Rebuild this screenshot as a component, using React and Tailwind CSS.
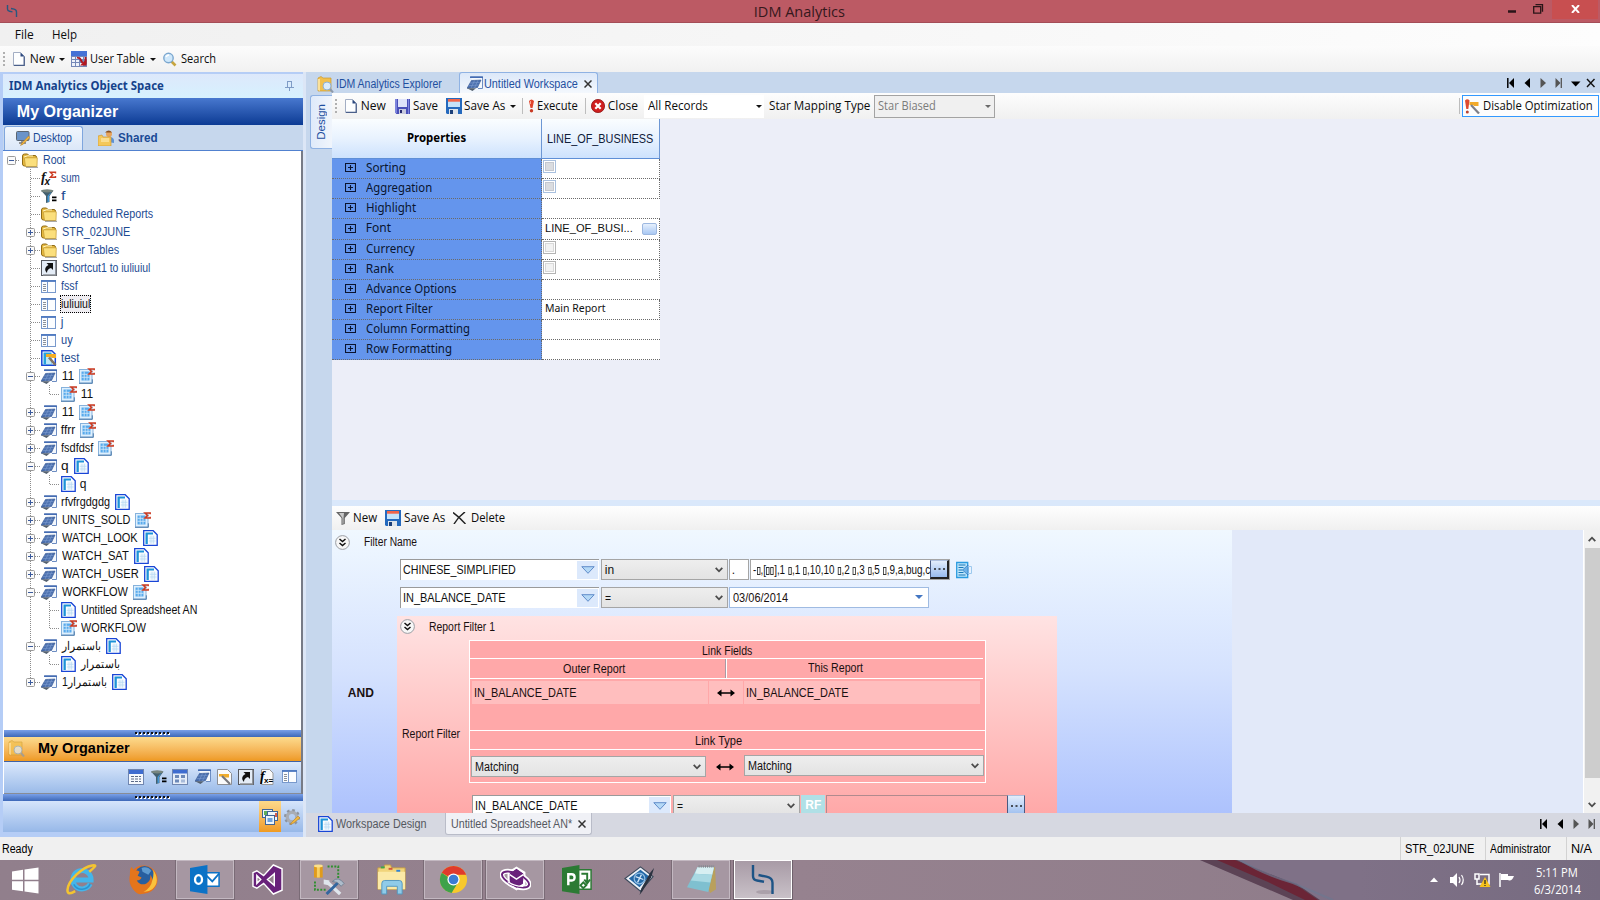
import React, { useLayoutEffect, useRef, useState } from "react";

const SANS = "font-['Liberation_Sans',sans-serif]";
const UI = "font-['Open_Sans',sans-serif]";
const TAHOMA = "font-['Noto_Sans',sans-serif]";

/* A single-line label condensed or widened to occupy w pixels. */
function T({ w, className = "", children }) {
  const ref = useRef(null);
  const [k, setK] = useState(1);
  useLayoutEffect(() => {
    const n = ref.current.offsetWidth;
    if (n) setK((w + 1) / n);
  }, [w]);
  return (
    <span className={"block shrink-0 whitespace-pre " + className} style={{ width: w }}>
      <span ref={ref} className="-ml-[0.2px] inline-block origin-left" style={{ transform: `scaleX(${k})` }}>
        {children}
      </span>
    </span>
  );
}

function Svg({ w = 16, h = 16, vb, className = "", children }) {
  return (
    <svg width={w} height={h} viewBox={vb || `0 0 ${w} ${h}`} className={"block shrink-0 " + className}>
      {children}
    </svg>
  );
}

/* ---------- 16px icons ---------- */
const Page = ({ className }) => (
  <Svg w={12} h={14} className={className}>
    <path d="M.5.5h7l4 4v9H.5z" fill="#fdfeff" stroke="#a3aec4" />
    <path d="M7.5.5l4 4h-4z" fill="#2f4a80" />
    <path d="M11.200 4.500v9H1" stroke="#4a5f8a" strokeWidth="1.300" fill="none" />
  </Svg>
);
const Caret = ({ className = "" }) => (
  <Svg w={6} h={3} className={className}><path d="M0 0h6L3 3z" fill="#111" /></Svg>
);
const CalTable = ({ className }) => (
  <Svg className={className}>
    <rect width="16" height="16" fill="#7488b8" />
    <rect width="16" height="5" fill="#4572d6" />
    <path d="M1 6h3v2H1zM5 6h3v2H5zM9 6h3v2H9zM1 9h3v2H1zM5 9h3v2H5zM1 12h3v3H1zM5 12h3v3H5zM9 12h3v3H9zM13 6h2v2h-2z" fill="#eef2fb" />
    <path d="M6 6.500l3 1 2.500 4.500M14.500 6v7" stroke="#b3161e" strokeWidth="1.800" fill="none" />
    <path d="M15.500 8v6.500H9z" fill="#b3161e" />
  </Svg>
);
const Search = ({ className }) => (
  <Svg w={14} h={15} className={className}>
    <path d="M8 9l4.500 4.500" stroke="#c7a53e" strokeWidth="2.600" />
    <circle cx="5.500" cy="6" r="4.700" fill="#cfe8fb" stroke="#7ba7cf" strokeWidth="1.400" />
    <path d="M3 5q1-2 3-2" stroke="#fff" strokeWidth="1.400" fill="none" />
  </Svg>
);
const Floppy = ({ className }) => (
  <Svg w={15} h={15} className={className}>
    <path d="M0 0h15v15H1.500L0 13.500z" fill="#4a4fb8" />
    <path d="M0 0h2v14H0z" fill="#7d84dc" />
    <path d="M3 0h9v8H3z" fill="#dfe3fa" />
    <path d="M13.500 0v15" stroke="#7f86e0" fill="none" />
    <path d="M4 10h7v5H4z" fill="#c8cade" /><path d="M5 11h2v3H5z" fill="#25286e" />
  </Svg>
);
const FloppyRed = ({ className }) => (
  <Svg w={16} h={16} className={className}>
    <path d="M0 0h16v16H1l-1-1z" fill="#2569bd" />
    <path d="M2 1h12v3H2z" fill="#f0644a" /><path d="M2 3.700h12V9H2z" fill="#c4e2fa" />
    <path d="M3 11h9v5H3z" fill="#dfe4ea" /><path d="M4 12h3v4H4z" fill="#1c3f78" />
  </Svg>
);
const Bang = ({ className }) => (
  <Svg w={7} h={14} className={className}>
    <path d="M1 2q2.500-3 5 0L4.500 9h-2z" fill="#e0452c" /><circle cx="3.500" cy="11.800" r="1.700" fill="#c93a24" />
    <path d="M2.500 2v3" stroke="#f9a38f" />
  </Svg>
);
const CloseRed = ({ className }) => (
  <Svg w={14} h={14} className={className}>
    <circle cx="7" cy="7" r="6.600" fill="#cf1f1f" stroke="#8f1414" strokeWidth=".8" />
    <path d="M4.300 4.300l5.400 5.400M9.700 4.300L4.300 9.700" stroke="#fff" strokeWidth="2.200" />
  </Svg>
);
const ExecWrench = ({ className }) => (
  <Svg w={15} h={15} className={className}>
    <path d="M0 1.500q2.300-2.500 4.600 0L3.300 10H1.300z" fill="#dd4a30" /><circle cx="2.300" cy="13" r="1.500" fill="#b94432" />
    <path d="M4.500 3h9v4H9L8 6H4.500z" fill="#f2aa2a" /><path d="M6 6l8 8.500" stroke="#7f7f86" strokeWidth="2.200" />
  </Svg>
);
const FolderSearch = ({ className }) => (
  <Svg w={17} h={17} className={className}>
    <path d="M1 2l3-1.500 2 1.500h8v13H1z" fill="#f2c04e" stroke="#c9982f" strokeWidth=".7" />
    <path d="M3 3v12l-2-1V3z" fill="#fbe19a" />
    <circle cx="10" cy="10" r="4" fill="#dcecfa" stroke="#8fb0d0" /><path d="M13 13l3 3.500" stroke="#8d99aa" strokeWidth="2" />
  </Svg>
);
const Workspace = ({ className }) => (
  <Svg w={16} h={15} className={className}>
    <path d="M3.500 1h12v11.500H11" fill="#f4f8fd" stroke="#6d8dc2" />
    <path d="M3 1.200h13" stroke="#4068b0" strokeWidth="1.500" />
    <path d="M4.500 4.500L14 4 10.500 11.500 0 12.300z" fill="#4a6fae" stroke="#34548f" strokeWidth=".6" />
    <path d="M3 7l9.500-.6M1.500 9.700l10-.7M7.500 4.500L4 12M11 4.200L7.500 12" stroke="#7f9dd0" strokeWidth=".6" />
    <path d="M0 12.300h9L5.500 15z" fill="#54606f" />
  </Svg>
);
const Folder = () => (
  <Svg w={16} h={15}>
    <path d="M.5 3q0-2 2-2h3l1.500 1.500h6q1.500 0 1.500 2V13H2.500q-2 0-2-2z" fill="#e6b93e" stroke="#8f6b17" />
    <path d="M2.300 4.800h13L15 13.500H3.500z" fill="#fbdf7c" stroke="#c39a33" strokeWidth=".7" />
    <path d="M2 4q3-2 9-1" stroke="#fff5c4" fill="none" />
    <path d="M4 14.300h12" stroke="#777" strokeWidth=".8" />
  </Svg>
);
const FxSum = () => (
  <Svg w={16} h={15}>
    <text x="0" y="11" fontSize="14" fontStyle="italic" fontWeight="bold" fontFamily="Liberation Serif, serif" fill="#111">f</text>
    <text x="3.500" y="14" fontSize="10" fontWeight="bold" fontStyle="italic" fontFamily="Liberation Sans, sans-serif" fill="#111">x</text>
    <path d="M14.500 2.500V1.200H9.300l2.500 2.500-2.500 2.600h5.200V5" stroke="#cb3b22" strokeWidth="1.400" fill="none" />
  </Svg>
);
const FunnelEq = ({ className }) => (
  <Svg w={16} h={14} className={className}>
    <path d="M0 1.500h12.500L8.500 7v6l-3.500 1V7z" fill="#44606e" /><path d="M6.500 7v6.300l1.500-.6V7l3-5z" fill="#3f94d3" />
    <ellipse cx="6.200" cy="1.900" rx="6" ry="1.700" fill="#77857f" />
    <path d="M11 8.300h4.500M11 11.300h4.500" stroke="#000" strokeWidth="1.800" />
  </Svg>
);
const Shortcut = ({ className }) => (
  <Svg className={className}>
    <rect x=".5" y=".5" width="15" height="15" fill="#e4ecf6" stroke="#56585e" />
    <path d="M14.700 1v14H2" stroke="#8c9097" fill="none" strokeWidth="1.300" />
    <path d="M12 3v7l-2-2c-3 1-4 2.500-4 5-3-3-2-6.500 1.500-8L5.500 3z" fill="#111" />
  </Svg>
);
const FormIcon = ({ className }) => (
  <Svg w={15} h={13} className={className}>
    <rect x=".5" y=".5" width="14" height="12" fill="#fbfdff" stroke="#7899cc" />
    <path d="M0 1h15" stroke="#4c78c0" strokeWidth="1.800" /><path d="M6.500 2v10" stroke="#7899cc" />
    <path d="M2 4.500h3M2 6.500h3M2 8.500h3M2 10.500h3" stroke="#8a9099" />
  </Svg>
);
const TestIcon = () => (
  <Svg w={16} h={16}>
    <path d="M.8.800h10l3.500 3.500v11H.800z" fill="#fff" stroke="#1845d6" strokeWidth="1.500" />
    <path d="M2.500 2.500h8v12h-8z" fill="#27a3dc" /><path d="M5 6h5v8H5z" fill="#bfe7f6" />
    <path d="M5 4h10v4h-4L10 7H5z" fill="#f4ad24" /><path d="M8 7.500l6.500 7.500" stroke="#7f7466" strokeWidth="2.600" />
  </Svg>
);
const ReportSum = () => (
  <Svg w={16} h={16}>
    <rect x=".5" y="1.500" width="12.500" height="13.500" fill="#dff0fd" stroke="#86b2dc" />
    <path d="M2.500 3.500h8v9h-8z" fill="#58aaec" /><path d="M5.200 3.500v9M8 6v6.500M2.500 6.300h8M2.500 9.300h8" stroke="#d6ebfb" strokeWidth=".8" />
    <path d="M0 15.300h13.300v-4" stroke="#4f7dac" fill="none" />
    <path d="M15.200 2.300V1H10l2.600 2.400L10 6h5.200V4.700" stroke="#cb3b22" strokeWidth="1.500" fill="none" />
  </Svg>
);
const Sheet = ({ className }) => (
  <Svg w={15} h={16} className={className}>
    <path d="M.7.700h9.500l4 4v10.600H.700z" fill="#fff" stroke="#1845d6" strokeWidth="1.300" />
    <path d="M2.500 2.500h7.500v2H4.800v9.500H2.500z" fill="#1d93d8" />
    <path d="M5.800 5.500h6.700v8.200H5.800z" fill="#eef7fd" /><path d="M8 5.700v8M10.300 5.700v8M5.800 8.300h6.700M5.800 11h6.700" stroke="#b4d9f2" strokeWidth=".7" />
  </Svg>
);
const TableIcon = () => (
  <Svg w={16} h={16}>
    <rect x=".5" y=".5" width="15" height="15" fill="#f5f8fd" stroke="#7086b0" />
    <path d="M1 1h14v4H1z" fill="#3e6cd0" />
    <path d="M3 7.500h10M3 10h10M3 12.500h10" stroke="#5c6b88" strokeDasharray="3 1" />
  </Svg>
);
const DashIcon = () => (
  <Svg w={16} h={16}>
    <rect x=".5" y=".5" width="15" height="15" fill="#e6edf8" stroke="#7086b0" />
    <path d="M1 1h14v3.500H1z" fill="#3e6cd0" /><path d="M3 6h4v3H3zM9 6h4v3H9zM3 10.500h4v3H3z" fill="#6d89b8" /><path d="M9 10.500h4v3H9z" fill="#a8bbda" />
  </Svg>
);
const WandPage = () => (
  <Svg w={15} h={16}>
    <path d="M.5.500h10l4 4v11H.5z" fill="#fbfbfb" stroke="#8c8f96" />
    <path d="M2 5h10v3.500H8L7 7.500H2z" fill="#f0ad2d" /><path d="M5 7l8 8" stroke="#77777c" strokeWidth="2.200" />
  </Svg>
);
const FxPage = () => (
  <Svg w={14} h={16}>
    <path d="M1.500.5h8l3.500 3.500v11.500H1.500z" fill="#fafafa" stroke="#999" />
    <text x="0" y="12" fontSize="14" fontStyle="italic" fontWeight="bold" fontFamily="Liberation Serif, serif">f</text>
    <text x="4" y="14" fontSize="8" fontWeight="bold" fontFamily="Liberation Sans, sans-serif">x=</text>
  </Svg>
);

/* ---------- object tree ---------- */
const TREE = [
  { l: 0, box: "-", icon: Folder, t: "Root", w: 21, c: "b", g: 5 },
  { l: 1, icon: FxSum, t: "sum", w: 18, c: "b", g: 4 },
  { l: 1, icon: FunnelEq, t: "f", w: 3, c: "b", g: 4 },
  { l: 1, icon: Folder, t: "Scheduled Reports", w: 90, c: "b", g: 5 },
  { l: 1, box: "+", icon: Folder, t: "STR_02JUNE", w: 67, c: "b", g: 5 },
  { l: 1, box: "+", icon: Folder, t: "User Tables", w: 56, c: "b", g: 5 },
  { l: 1, icon: Shortcut, t: "Shortcut1 to iuliuiul", w: 87, c: "b", g: 5 },
  { l: 1, icon: FormIcon, t: "fssf", w: 16, c: "b", g: 5 },
  { l: 1, icon: FormIcon, t: "iuliuiul", w: 28, sel: true, g: 4 },
  { l: 1, icon: FormIcon, t: "j", w: 2, c: "b", g: 5 },
  { l: 1, icon: FormIcon, t: "uy", w: 11, c: "b", g: 5 },
  { l: 1, icon: TestIcon, t: "test", w: 17, c: "b", g: 4 },
  { l: 1, box: "-", icon: Workspace, t: "11", w: 11, g: 5, tail: "r" },
  { l: 2, last: true, icon: ReportSum, t: "11", w: 11, g: 4 },
  { l: 1, box: "+", icon: Workspace, t: "11", w: 11, g: 5, tail: "r" },
  { l: 1, box: "+", icon: Workspace, t: "ffrr", w: 13, g: 4, tail: "r" },
  { l: 1, box: "+", icon: Workspace, t: "fsdfdsf", w: 31, g: 4, tail: "r" },
  { l: 1, box: "-", icon: Workspace, t: "q", w: 7, g: 4, tail: "s" },
  { l: 2, last: true, icon: Sheet, t: "q", w: 6, g: 4 },
  { l: 1, box: "+", icon: Workspace, t: "rfvfrgdgdg", w: 48, g: 4, tail: "s" },
  { l: 1, box: "+", icon: Workspace, t: "UNITS_SOLD", w: 67, g: 5, tail: "r" },
  { l: 1, box: "+", icon: Workspace, t: "WATCH_LOOK", w: 75, g: 5, tail: "s" },
  { l: 1, box: "+", icon: Workspace, t: "WATCH_SAT", w: 66, g: 5, tail: "s" },
  { l: 1, box: "+", icon: Workspace, t: "WATCH_USER", w: 76, g: 5, tail: "s" },
  { l: 1, box: "-", icon: Workspace, t: "WORKFLOW", w: 65, g: 5, tail: "r" },
  { l: 2, icon: Sheet, t: "Untitled Spreadsheet AN", w: 115, g: 5 },
  { l: 2, last: true, icon: ReportSum, t: "WORKFLOW", w: 64, g: 4 },
  { l: 1, box: "-", icon: Workspace, t: "باستمرار", w: 38, g: 5, tail: "s" },
  { l: 2, last: true, icon: Sheet, t: "باستمرار", w: 38, g: 5 },
  { l: 1, box: "+", end: true, icon: Workspace, t: "باستمرار1", w: 44, g: 5, tail: "s" },
];
const GUT = [18, 37, 57];

function Gutter({ r }) {
  const bx = r.l === 0 ? 3 : 22;
  return (
    <Svg w={GUT[r.l]} h={18}>
      <g stroke="#8c8c8c" strokeDasharray="1 1" fill="none">
        {r.l > 0 && <path d={`M26.500 0V${r.end ? 9 : 18}`} />}
        {r.l === 0 && <path d="M8 9.500h8" />}
        {r.l === 1 && <path d="M27 9.500h9" />}
        {r.l === 2 && <path d={`M45.500 0V${r.last ? 9 : 18}M46 9.500h9`} />}
      </g>
      {r.box && (
        <g>
          <rect x={bx + 0.5} y="5.500" width="8" height="8" rx="1" fill="#fafafa" stroke="#9a9a9a" />
          <path d={`M${bx + 2} 9.500h5` + (r.box === "+" ? `M${bx + 4.5} 7v5` : "")} stroke="#3b5a9c" />
        </g>
      )}
    </Svg>
  );
}

const MG = { 4: "ml-[4px]", 5: "ml-[5px]", 6: "ml-[6px]", 7: "ml-[7px]" };

function TreeRow({ r }) {
  const Icon = r.icon;
  return (
    <div className="flex h-[18px] shrink-0 items-center">
      <Gutter r={r} />
      <Icon />
      <div className={MG[r.g] + (r.sel ? " -my-px border border-dotted border-black bg-[#f0eef2] py-px pr-[1px]" : "")}>
        <T w={r.w} className={"text-[12px] leading-[14px] " + (r.c ? "text-[#1d4b92]" : "text-[#101010]")}>{r.t}</T>
      </div>
      {r.tail && <div className="ml-[6px]">{r.tail === "r" ? <ReportSum /> : <Sheet />}</div>}
    </div>
  );
}

function Splitter() {
  return (
    <div className="flex h-[7px] shrink-0 items-center justify-center bg-linear-to-b from-[#7aa0e8] to-[#3d68b8]">
      <Svg w={36} h={3}>
        <path d="M1 2h35" stroke="#fff" strokeWidth="2" strokeDasharray="2 2" />
        <path d="M0 1h35" stroke="#111" strokeWidth="2" strokeDasharray="2 2" />
      </Svg>
    </div>
  );
}

function LeftPanel() {
  return (
    <div className="flex h-full w-[306px] shrink-0 bg-[#dbe6f7]">
      <div className="flex h-full w-[306px] flex-col border-r-[3px] border-[#dce6f6] bg-[#b5cdf6] pt-[2px] pl-[3px]">
        <div className="flex h-[24px] w-full shrink-0 items-center bg-linear-to-b from-[#dde8fb] to-[#d6f1fe] pl-[6px]">
          <T w={154} className={"text-[12px] leading-[16px] font-bold text-[#15428b] " + TAHOMA}>IDM Analytics Object Space</T>
          <Svg w={9} h={10} className="ml-[122px]"><path d="M2.500 0v6M6.500 0v6M2 .5h5M0 6.500h9M4.500 7v3" stroke="#7f9cc6" /></Svg>
        </div>
        <div className="flex h-[27px] w-full shrink-0 items-center bg-linear-to-b from-[#4878cf] to-[#0b3b94] pl-[14px]">
          <T w={100} className="text-[16px] leading-[20px] font-bold text-white">My Organizer</T>
        </div>
        <div className="flex h-[26px] w-full shrink-0 items-end border-b border-[#5181cf] bg-[#c6d7ed]">
          <div className="ml-px flex h-[24px] w-[79px] items-center rounded-t-[3px] border border-b-0 border-[#7fa6de] bg-linear-to-b from-[#f2f7fd] to-[#dbe7f8] pl-[11px]">
            <Svg w={14} h={15}>
              <rect x=".5" y=".5" width="12.500" height="9" rx="1" fill="#6a93c9" stroke="#5c6672" /><path d="M3 12h7M6 10v2" stroke="#777" strokeWidth="1.500" />
              <path d="M12.500 5L6 12l-1.500 2.500L7 13.300 14 6.500z" fill="#f3b53d" stroke="#a97824" strokeWidth=".5" />
            </Svg>
            <T w={38} className="-mt-px ml-[3px] text-[12px] leading-[14px] text-[#1a4a96]">Desktop</T>
          </div>
          <div className="flex h-[24px] items-center pl-[15px]">
            <Svg w={16} h={16}>
              <circle cx="11" cy="4" r="3" fill="#e7a35c" /><path d="M7 2.500q4-4 7 0" fill="#8a5120" />
              <path d="M5 11q0-4 6-4t5 6z" fill="#5c92d6" />
              <path d="M0 6l4-1 1 2h8v9H0z" fill="#f4c85b" stroke="#cf9a35" strokeWidth=".7" /><path d="M3 9h8M3 11h8" stroke="#fff3c9" />
            </Svg>
            <T w={39} className="ml-[4px] text-[12px] leading-[14px] font-bold text-[#1a4a96]">Shared</T>
          </div>
        </div>
        <div className="flex min-h-0 flex-1 flex-col border-r-2 border-[#777b86] bg-white pl-px">
          <div className="flex min-h-0 flex-1 flex-col">{TREE.map((r, i) => <TreeRow key={i} r={r} />)}</div>
          <Splitter />
          <div className="flex h-[24px] shrink-0 items-center bg-linear-to-b from-[#fcdb8d] to-[#ee991f] pl-[4px]">
            <FolderSearch className="-mt-[2px] opacity-70" />
            <T w={91} className="-mt-[2px] ml-[13px] text-[14px] leading-[16px] font-bold text-black">My Organizer</T>
          </div>
          <div className="flex h-[33px] shrink-0 items-center border-t border-b border-t-[#3f62a6] border-b-[#888c96] bg-linear-to-b from-[#dbe8fb] to-[#9bbbe9] pb-[2px] pl-[124px]">
            <TableIcon /><FunnelEq className="ml-[7px]" /><div className="ml-[5px]"><DashIcon /></div>
            <Workspace className="ml-[7px]" /><div className="ml-[6px]"><WandPage /></div><Shortcut className="ml-[6px]" />
            <div className="ml-[6px]"><FxPage /></div><FormIcon className="ml-[8px]" />
          </div>
        </div>
        <Splitter />
        <div className="mb-[5px] flex h-[31px] shrink-0 justify-end bg-linear-to-b from-[#d6e5fb] to-[#97b8e8]">
          <div className="flex w-[22px] items-center justify-center bg-linear-to-b from-[#fcd98a] to-[#f09b20]">
            <Svg w={16} h={16}>
              <g fill="#eef5fb" stroke="#3f6498"><rect x=".5" y=".5" width="10" height="8" /><rect x="5.500" y="2.500" width="10" height="9" /><rect x="3.500" y="6.500" width="9" height="9" /></g>
              <path d="M2 2h3v4H2z" fill="#5fae5b" /><path d="M13 4h2v4h-2z" fill="#d65b4c" /><path d="M5.500 9h5v4h-5z" fill="#6fa3e0" />
            </Svg>
          </div>
          <div className="flex w-[22px] items-center justify-center">
            <Svg w={16} h={16}>
              <circle cx="8" cy="8" r="4.800" fill="none" stroke="#a9adb4" strokeWidth="3.400" /><circle cx="8" cy="8" r="7" fill="none" stroke="#8e949d" strokeWidth="2" strokeDasharray="2.700 2.800" />
              <path d="M14 7l-6 6-2 2.500L9 14.500 16 9z" fill="#f1b73f" stroke="#b17d23" strokeWidth=".5" />
            </Svg>
          </div>
        </div>
      </div>
    </div>
  );
}

/* ---------- document tabs and navigation ---------- */
function Nav({ full }) {
  return (
    <Svg w={full ? 90 : 56} h={10} className="ml-auto">
      <path d="M.8 0v10" stroke="#000" strokeWidth="1.500" /><path d="M7 0v10L2 5z" fill="#000" />
      <path d="M23 0v10L17.500 5z" fill="#000" />
      <path d="M33.500 0v10L39 5z" fill="#555" />
      <path d="M48.500 0v10L53.500 5z" fill="#555" /><path d="M54.300 0v10" stroke="#555" strokeWidth="1.300" />
      {full && <path d="M64 3.500h9.500L68.700 8.500z" fill="#000" />}
      {full && <path d="M80 1l7.500 8M87.500 1L80 9" stroke="#111" strokeWidth="1.400" />}
    </Svg>
  );
}
const X = ({ className }) => (
  <Svg w={8} h={8} className={className}><path d="M.5.500l7 7M7.500.500l-7 7" stroke="#333" strokeWidth="1.500" /></Svg>
);
const Chev = ({ className }) => (
  <Svg w={8} h={6} className={className}><path d="M.7.800L4 4.300 7.300.800" stroke="#4c4c4c" strokeWidth="1.800" fill="none" /></Svg>
);
const Grip = ({ className }) => (
  <Svg w={2} h={14} className={className}><path d="M1 0v14" stroke="#b0b0b0" strokeWidth="2" strokeDasharray="2 2" /></Svg>
);
const Sep = ({ className }) => <div className={"h-[16px] w-px bg-[#bdbdbd] " + className} />;
const U = ({ w, className = "", children }) => (
  <T w={w} className={"text-[12px] leading-[16px] text-[#0c0c0c] " + UI + " " + className}>{children}</T>
);

const PROPS = [
  { t: "Sorting", w: 39, check: "b", r: true },
  { t: "Aggregation", w: 65, check: "b", r: true },
  { t: "Highlight", w: 49 },
  { t: "Font", w: 24, font: true, r: true },
  { t: "Currency", w: 48, check: "g", r: true },
  { t: "Rank", w: 27, check: "g", r: true },
  { t: "Advance Options", w: 90 },
  { t: "Report Filter", w: 66, text: "Main Report", r: true },
  { t: "Column Formatting", w: 103 },
  { t: "Row Formatting", w: 85 },
];

function PropTable() {
  return (
    <div className="w-[328px]">
      <div className="flex h-[40px] border-b border-[#5f8fd6] bg-linear-to-b from-[#fafdff] via-[#e8f2fe] to-[#cde2fd]">
        <div className="flex w-[210px] items-center justify-center border-r border-[#6d97d4]">
          <T w={58} className={"-mt-px text-[12px] leading-[16px] font-bold text-black " + TAHOMA}>Properties</T>
        </div>
        <div className="flex w-[118px] items-center border-r border-[#6d97d4] pl-[5px]">
          <T w={105} className="text-[12px] leading-[16px] text-[#10203a]">LINE_OF_BUSINESS</T>
        </div>
      </div>
      {PROPS.map((p) => (
        <div key={p.t} className={"flex " + (p.font ? "h-[21px]" : "h-[20px]")}>
          <div className="flex w-[210px] items-center border-r border-b border-dotted border-[#6a6a6a] bg-[#6495ed] pb-[2px] pl-[13px]">
            <Svg w={11} h={9}><path d="M.5.500h10v8H.5zM3 4.500h5M5.500 2v5" fill="none" stroke="#0b1430" strokeWidth="1.100" /></Svg>
            <T w={p.w} className={"ml-[10px] text-[12px] leading-[16px] text-[#0a1530] " + TAHOMA}>{p.t}</T>
          </div>
          <div className={"flex w-[118px] items-center border-b border-dotted border-[#6a6a6a] bg-white " + (p.r ? "border-r" : "")}>
            {p.check && (
              <div className={"mb-[4px] ml-[1px] flex size-[13px] items-center justify-center border bg-white " + (p.check === "b" ? "border-[#a9c0de]" : "border-[#b4b4b4]")}>
                <div className={"size-[9px] border " + (p.check === "b" ? "border-[#c4c8d0] bg-[#dadce0]" : "border-[#d8d8d8] bg-[#f2f2f2]")} />
              </div>
            )}
            {p.font && <T w={87} className={"-mt-[2px] ml-[3px] text-[11.500px] leading-[14px] text-[#111] " + SANS}>LINE_OF_BUSI...</T>}
            {p.font && <div className="ml-[10px] h-[12px] w-[15px] rounded-[2px] border border-[#9db8e0] bg-linear-to-b from-[#e6f0fd] to-[#a9c8f3]" />}
            {p.text && <T w={60} className={"-mt-[3px] ml-[3px] text-[11.500px] leading-[14px] text-[#111] " + TAHOMA}>{p.text}</T>}
          </div>
        </div>
      ))}
    </div>
  );
}

/* ---------- filter designer ---------- */
const Expander = ({ className }) => (
  <Svg w={15} h={15} className={className}>
    <circle cx="7.500" cy="7.500" r="6.900" fill="#f7f7f7" stroke="#9a9da3" />
    <path d="M4.500 4l3 2.500 3-2.500M4.500 8l3 2.500 3-2.500" stroke="#111" strokeWidth="1.500" fill="none" />
  </Svg>
);
function Field({ tw, children }) {
  return (
    <div className="flex h-[21px] w-[199px] shrink-0 items-center border-t border-l border-[#9a9a9a] bg-white pl-[2px]">
      <T w={tw} className="text-[12px] leading-[16px] text-[#111]">{children}</T>
      <div className="mr-px ml-auto flex h-[18px] w-[21px] items-center justify-center bg-[#dce9fc]">
        <Svg w={14} h={8}><path d="M.8.700h12.400L7 7.300z" fill="#b4d8f6" stroke="#5582c4" strokeWidth=".9" /></Svg>
      </div>
    </div>
  );
}
function Select({ wc, tw, children }) {
  return (
    <div className={"flex h-[21px] shrink-0 items-center border border-[#a5a5a5] bg-linear-to-b from-[#eeeeee] to-[#e3e3e3] pl-[3px] " + wc}>
      <T w={tw} className="text-[12px] leading-[16px] text-[#111]">{children}</T>
      <Chev className="mr-[4px] ml-auto" />
    </div>
  );
}
const Both = ({ className }) => (
  <Svg w={18} h={8} className={className}><path d="M2 4h14" stroke="#000" strokeWidth="1.500" /><path d="M4.500 .500v7L0 4zM13.500 .500v7L18 4z" fill="#000" /></Svg>
);
const Tofu = () => <span className="mx-[0.5px] inline-block h-[8px] w-[4px] border border-[#333] align-[-1px]" />;
const Dots = ({ className = "" }) => (
  <div className={"flex shrink-0 items-center justify-center border border-[#4a5a80] border-t-[#aebfdd] bg-linear-to-b from-[#e3edfb] to-[#98bbee] " + className}>
    <Svg w={11} h={2}><path d="M0 1h2M4.500 1h2M9 1h2" stroke="#222" strokeWidth="1.500" /></Svg>
  </div>
);
const L = ({ w, className = "", children }) => <T w={w} className={"text-[12px] leading-[16px] text-[#1a1010] " + className}>{children}</T>;

function Filters() {
  return (
    <div className="flex h-[283px] overflow-hidden">
      <div className="flex w-[900px] shrink-0 flex-col bg-linear-to-b from-[#f0f8ff] via-[#d5e2fe] to-[#adc2fd]">
        <div className="flex h-[24px] shrink-0 items-center pl-[3px]">
          <Expander /><L w={52} className="ml-[14px]">Filter Name</L>
        </div>
        <div className="mt-[5px] flex h-[21px] shrink-0 items-center pl-[68px]">
          <Field tw={112}>CHINESE_SIMPLIFIED</Field>
          <div className="ml-[2px]"><Select wc="w-[127px]" tw={8}>in</Select></div>
          <div className="ml-px flex h-[21px] w-[20px] items-center border border-[#a5a5a5] bg-white pl-[2px]"><L w={2}>.</L></div>
          <div className="ml-px flex h-[21px] w-[200px] items-center border border-[#a5a5a5] bg-white pl-[2px]">
            <div className="w-[177px] shrink-0">
              <T w={176} className="text-[12px] leading-[16px] text-[#111]">
                -<Tofu />,[<Tofu /><Tofu />],1 <Tofu />,1 <Tofu />,10,10 <Tofu />,2 <Tofu />,3 <Tofu />,5 <Tofu />,9,a,bug,c
              </T>
            </div>
            <Dots className="h-[19px] w-[19px] border-r-2 border-b-2 border-r-[#222] border-b-[#222]" />
          </div>
          <Svg w={17} h={18} className="ml-[6px]">
            <path d="M.700 1.500h11v15H.700z" fill="#bfe6fb" stroke="#2a9be0" strokeWidth="1.300" />
            <path d="M2.500 4h7M2.500 6.500h5M2.500 9h4M2.500 11.500h5M2.500 14h7" stroke="#1777b8" />
            <path d="M12 4v10L6.500 9z" fill="#6fb2e8" stroke="#2a78c0" strokeWidth=".7" /><path d="M12 5.500h3.500v7H12" fill="none" stroke="#9cc9ee" />
          </Svg>
        </div>
        <div className="mt-[7px] flex h-[21px] shrink-0 items-center pl-[68px]">
          <Field tw={101}>IN_BALANCE_DATE</Field>
          <div className="ml-[2px]"><Select wc="w-[127px]" tw={5}>=</Select></div>
          <div className="ml-px flex h-[21px] w-[200px] items-center border border-[#9fbbe2] bg-white pl-[3px]">
            <L w={54}>03/06/2014</L>
            <Svg w={8} h={4} className="mr-[5px] mb-px ml-auto"><path d="M0 0h8L4 4z" fill="#4376c2" /></Svg>
          </div>
        </div>
        <div className="mt-[8px] flex h-[205px] shrink-0">
          <div className="w-[65px] pt-[69px] pl-[16px]">
            <L w={25} className="font-bold">AND</L>
          </div>
          <div className="flex w-[660px] flex-col bg-linear-to-b from-[#ffe3e3] to-[#ffa6a6] to-[205px]">
            <div className="flex h-[24px] shrink-0 items-center pl-[3px]">
              <Expander className="-mt-[3px]" /><L w={65} className="-mt-[2px] ml-[14px]">Report Filter 1</L>
            </div>
            <div className="flex">
              <div className="w-[72px] pt-[86px] pl-[5px]"><L w={57}>Report Filter</L></div>
              <div>
                <div className="flex h-[143px] w-[517px] flex-col border border-white bg-[#ffa8a9]">
                  <div className="mr-[2px] flex h-[18px] items-end justify-center border-b border-white pl-px"><L w={49} className="-mb-px">Link Fields</L></div>
                  <div className="mr-[2px] flex h-[20px] border-b border-white">
                    <div className="flex w-[257px] items-center justify-center border-r border-white shadow-[inset_-1px_0_0_#a99aa5]"><L w={61} className="-ml-[8px]">Outer Report</L></div>
                    <div className="flex flex-1 items-center justify-center pb-[2px]"><L w={54} className="-ml-[40px]">This Report</L></div>
                  </div>
                  <div className="mt-[2px] ml-[2px] flex h-[23px] gap-px">
                    <div className="flex w-[236px] items-center bg-[#ffbebe] pl-[2px]"><L w={101}>IN_BALANCE_DATE</L></div>
                    <div className="flex w-[34px] items-center justify-center bg-[#ffbebe]"><Both /></div>
                    <div className="flex w-[236px] items-center bg-[#ffbebe] pl-[2px]"><L w={101}>IN_BALANCE_DATE</L></div>
                  </div>
                  <div className="mt-[26px] flex h-[19px] items-end justify-center border-t border-white pr-[18px]"><L w={46}>Link Type</L></div>
                  <div className="mr-[2px] flex border-t border-white pt-[5px] pl-px">
                    <div className="pt-px"><Select wc="w-[235px]" tw={43}>Matching</Select></div>
                    <Both className="mt-[8px] ml-[10px]" />
                    <div className="ml-[10px]"><Select wc="w-[240px]" tw={43}>Matching</Select></div>
                  </div>
                </div>
                <div className="mt-[12px] flex h-[21px] pl-[3px]">
                  <Field tw={101}>IN_BALANCE_DATE</Field>
                  <div className="ml-[2px]"><Select wc="w-[127px]" tw={5}>=</Select></div>
                  <div className="ml-px flex w-[24px] items-center justify-center bg-[#b0e0e6] pb-[2px]"><T w={15} className="text-[12px] leading-[14px] font-bold text-white">RF</T></div>
                  <div className="ml-px w-[181px] border-t border-l border-[#b08a8e]" />
                  <Dots className="h-[22px] w-[18px]" />
                </div>
              </div>
            </div>
          </div>
        </div>
      </div>
      <div className="flex-1 bg-[#e2e9f9]" />
      <div className="flex w-[17px] shrink-0 flex-col items-center border-l border-white bg-[#f1f1f1]">
        <div className="flex h-[18px] items-center"><Chev className="rotate-180" /></div>
        <div className="h-[230px] w-[15px] bg-[#cdcdcd]" />
        <Chev className="mt-auto mb-[5px]" />
      </div>
    </div>
  );
}

function Main() {
  return (
    <div className="flex min-w-0 flex-1 flex-col bg-[#c6d7ed]">
      <div className="flex h-[21px] shrink-0 items-center">
        <div className="flex h-full w-[153px] items-center pl-[11px]">
          <FolderSearch className="mt-[4px]" />
          <T w={105} className="mt-[2px] ml-[2px] text-[12px] leading-[14px] text-[#1f4f9f]">IDM Analytics Explorer</T>
        </div>
        <div className="flex h-[21px] w-[139px] items-center rounded-t-[3px] border border-b-0 border-[#8fb2e3] bg-linear-to-b from-[#dce8f9] to-[#f4f8fd] pl-[7px]">
          <Workspace />
          <T w={93} className="mt-px ml-px text-[12px] leading-[14px] text-[#1f4f9f]">Untitled Workspace</T>
          <X className="mt-px ml-[7px]" />
        </div>
        <div className="ml-auto pr-[3px]"><Nav full /></div>
      </div>
      <div className="flex h-[720px] shrink-0">
        <div className="w-[26px] shrink-0 pt-[2px] pl-[4px]">
          <div className="flex h-[54px] w-[22px] items-center justify-center rounded-l-[3px] border border-r-0 border-[#8fb2e3] bg-linear-to-r from-[#dfeafa] to-[#f0f5fc] pr-[2px]">
            <span className="rotate-180 text-[11.500px] leading-[14px] text-[#1f4f9f] [writing-mode:vertical-rl]">Design</span>
          </div>
        </div>
        <div className="flex min-w-0 flex-1 flex-col bg-[#eceef8]">
          <div className="flex h-[26px] shrink-0 items-center bg-linear-to-b from-[#fdfdfd] to-[#f0f0f0] pl-[3px]">
            <Grip /><Page className="ml-[8px]" /><U w={24} className="ml-[4px]">New</U>
            <Floppy className="ml-[10px]" /><U w={24} className="ml-[3px]">Save</U>
            <FloppyRed className="ml-[9px]" /><U w={40} className="ml-[2px]">Save As</U>
            <Caret className="ml-[6px]" /><Sep className="ml-[6px]" />
            <Bang className="ml-[5px]" /><U w={40} className="ml-[2px]">Execute</U><Sep className="ml-[8px]" />
            <CloseRed className="ml-[5px]" /><U w={29} className="ml-[3px]">Close</U>
            <div className="ml-[7px] flex h-[23px] w-[120px] items-center bg-white pl-[4px]"><U w={59}>All Records</U><Caret className="mr-[2px] ml-auto" /></div>
            <U w={100} className="ml-[5px]">Star Mapping Type</U>
            <div className="ml-[5px] flex h-[23px] w-[121px] items-center border border-[#a3a3a3] bg-[#f0f0f0] pl-[3px]"><U w={57} className="!text-[#7b7b7b]">Star Biased</U><Caret className="mr-[3px] ml-auto opacity-60" /></div>
            <Sep className="ml-auto" />
            <div className="mr-px ml-[2px] flex h-[22px] w-[137px] items-center border border-[#3399ff] bg-[#fdfdfd] pl-[2px]">
              <ExecWrench /><U w={109} className="ml-[3px]">Disable Optimization</U>
            </div>
          </div>
          <div className="h-[381px] shrink-0"><PropTable /></div>
          <div className="h-[6px] shrink-0 bg-[#dae8fb]" />
          <div className="flex h-[24px] shrink-0 items-center bg-linear-to-b from-[#fefefe] to-[#f0f0f0] pl-[4px]">
            <Svg w={14} h={14}><path d="M0 1h14L8.800 7v6L5.500 14V7z" fill="#666" /><path d="M3 2h5l-.500 5v5.500l-1 .500V7z" fill="#c9c9c9" /></Svg>
            <U w={23} className="ml-[3px]">New</U><FloppyRed className="ml-[9px]" /><U w={40} className="ml-[3px]">Save As</U>
            <Svg w={13} h={12} className="ml-[9px]"><path d="M0 .500q7 5 12.500 11.500M12 0Q5 5 1 12" stroke="#222" strokeWidth="1.500" fill="none" /></Svg>
            <U w={33} className="ml-[5px]">Delete</U>
          </div>
          <Filters />
        </div>
      </div>
      <div className="flex h-[24px] shrink-0 bg-[#d6d8e1]">
        <div className="flex w-[139px] items-center pb-[2px] pl-[12px]"><Sheet /><T w={90} className="ml-[3px] text-[12px] leading-[14px] text-[#55585f]">Workspace Design</T></div>
        <div className="flex h-[22px] w-[147px] items-center rounded-b-[3px] border border-t-0 border-[#b9bcc8] bg-[#f0f1f6] pl-[5px]">
          <T w={120} className="text-[12px] leading-[14px] text-[#55585f]">Untitled Spreadsheet AN*</T><X className="ml-[7px]" />
        </div>
        <div className="ml-auto flex items-center pr-[4px] pb-[2px]"><Nav /></div>
      </div>
    </div>
  );
}

/* ---------- taskbar ---------- */
const TASKS = [
  { k: "ie", art: (<><path d="M25 20.500A9.500 9.500 0 1 1 26 16.500H9" stroke="#45b5ea" strokeWidth="5" fill="none" /><path d="M25 20.500A9.500 9.500 0 0 1 8 21" stroke="#2a93d0" strokeWidth="1.500" fill="none" /><path d="M24 8C31 2 32 1 27 1.500 17 3 2 17 1.500 27c0 4 3 4 8 1" stroke="#f4c430" strokeWidth="2.600" fill="none" /></>) },
  { k: "ff", art: (<><circle cx="16" cy="16" r="14.500" fill="#e8701a" /><circle cx="17" cy="12" r="10" fill="#285f9f" /><path d="M14 4q6-2 10 3l-3 4-6-3z" fill="#5f9bd0" /><path d="M2 9q0-5 2-6l2 4q4-1 6 1l-2 4 4 2q-1 3-5 3 4 6 10 3 5-3 4-9 4 5 2 12-5 9-14 8Q1 26 2 9z" fill="#e4751c" /><path d="M26 6q8 12-1 20-4 3-9 3 8-5 9-12 2-6 1-11z" fill="#fac23c" /></>) },
  { k: "ol", btn: true, art: (<><path d="M14 9h16v14H14z" fill="#fff" stroke="#0b72c6" strokeWidth="1.500" /><path d="M16 11l7 7 7-8" stroke="#0b72c6" strokeWidth="1.800" fill="none" /><path d="M0 4l18-3v30L0 28z" fill="#0b72c6" /><ellipse cx="8.800" cy="16" rx="3.600" ry="4.600" fill="none" stroke="#fff" strokeWidth="2.400" /></>) },
  { k: "vs", art: (<path d="M1 9l4-2 7 5L22 1l9 4v22l-9 4-10-11-7 5-4-2zM5 12v8l4-4zM23 10l-7 6 7 6z" fill="#68217a" fillRule="evenodd" stroke="#fff" strokeWidth="1.500" />) },
  { k: "sq", btn: true, art: (<><path d="M14 2.500h11v12M1 18v8.500h12" stroke="#2f8f2f" strokeWidth="2" strokeDasharray="2 1.500" fill="none" /><path d="M0 2h9v12H0z" fill="#e09b1c" /><path d="M3 2h3v12H3z" fill="#f8cf62" /><ellipse cx="4.500" cy="2" rx="4.500" ry="1.500" fill="#fbe08c" /><path d="M13 18l14 13" stroke="#dfe5ec" strokeWidth="3.500" /><path d="M13 31l13-13" stroke="#33669f" strokeWidth="3" /><path d="M19 18q6-6 12 2l-3 3-4-4z" fill="#aebccb" stroke="#5d7186" strokeWidth=".7" /><path d="M10 16l6 1-1 5-5-1z" fill="#dfe5ec" /></>) },
  { k: "ex", art: (<><path d="M2 4h6l1-3h6l1 3h14v22H2z" fill="#f1d47a" stroke="#caa345" /><path d="M2 8h28v18H2z" fill="#fbe9a6" /><path d="M5 3.500h4" stroke="#3fa64a" strokeWidth="2" /><path d="M13 5h4" stroke="#d5563b" strokeWidth="2" /><path d="M21 7h4" stroke="#2f83d6" strokeWidth="2" /><path d="M6 31V20q0-3 3-3h15q3 0 3 3v11h-5v-8H11v8z" fill="#8fcbe8" stroke="#5598bf" /></>) },
  { k: "ch", btn: true, art: (<><circle cx="16" cy="16" r="14" fill="#f7c92c" /><path d="M16 16L3.900 9A14 14 0 0 1 28.100 9L29 11H16z" fill="#df3a2d" /><path d="M3.900 9A14 14 0 0 0 14 30l6-10z" fill="#3ea24a" /><circle cx="16" cy="16" r="6.300" fill="#fff" /><circle cx="16" cy="16" r="5" fill="#3b7bd3" /></>) },
  { k: "vo", btn: true, art: (<><ellipse cx="16" cy="16" rx="15" ry="6.500" transform="rotate(24 16 16)" fill="none" stroke="#fff" strokeWidth="5" /><path d="M9 9l8-5 8 5v12l-8 5-8-5z" fill="#68217a" stroke="#fff" strokeWidth="2.500" /><ellipse cx="16" cy="16" rx="15" ry="6.200" transform="rotate(24 16 16)" fill="none" stroke="#68217a" strokeWidth="2" /><path d="M10 10l7-5 7 5v7l-7 4-7-4z" fill="#68217a" /><path d="M10 11l7 4.500 7-4.500M8 18q6 5 16 5" stroke="#fff" strokeWidth="1.500" fill="none" /></>) },
  { k: "pr", art: (<><path d="M14 6h16v20H14z" fill="#fff" stroke="#2c7a34" strokeWidth="1.500" /><path d="M20 10h6v9M23 16l3 4 3-4M19 22l3-3 3 3-3 3z" stroke="#2c7a34" strokeWidth="2" fill="none" /><path d="M0 4l18-3v30L0 28z" fill="#2c7a34" /><path d="M6.500 22V10.500h3.500q3 0 3 3.300T10 17H7" fill="none" stroke="#fff" strokeWidth="2.500" /></>) },
  { k: "xd", art: (<><path d="M17 3l13 10-13 15L1 15z" fill="#ecf1f7" stroke="#3c4a5c" strokeWidth="1.200" /><path d="M17 6l9 7-10 11L5 15z" fill="#2468a6" /><circle cx="16" cy="15" r="5.500" fill="none" stroke="#8fbce2" strokeWidth="1.300" /><path d="M12 13l8 3M18 11l-4 8" stroke="#d3e6f7" strokeWidth="1.300" /><path d="M31 4l-3 10-9 14-3 4 2-7 9-16z" fill="#2b3240" /></>) },
  { k: "np", btn: true, art: (<><path d="M13 3h17l1 23-6 4z" fill="#b9a05c" /><path d="M12 3h17l-6 26L1 24z" fill="#7fc0d0" /><path d="M12 3h17l-2 8-18-1z" fill="#d7eff2" /><path d="M9 10l18 1-2 8-20-2z" fill="#a9d9e3" /><path d="M13 2.500h16" stroke="#7d898f" strokeWidth="2.500" strokeDasharray="1 1.200" /></>) },
  { k: "id", active: true },
];

function Taskbar() {
  return (
    <div className="flex h-[40px] shrink-0 items-stretch overflow-hidden bg-linear-to-r from-[#917f8c] via-[#96828f] to-[#8c7a88] text-white">
      <div className="flex w-[50px] items-center pl-[11px]">
        <Svg w={28} h={27}><path d="M1 4.500l11-1.700v10H1zM13.500 2.600L27.500.500v12.300h-14zM1 14.200h11v10L1 22.700zM13.500 14.200h14v12.300l-14-2.100z" fill="#fff" /></Svg>
      </div>
      {TASKS.map((t) => (
        <div key={t.k} className={"mx-[2px] flex h-[39px] w-[58px] shrink-0 items-center justify-center " + (t.btn ? "border border-[#c3b8c1] bg-[#a697a2] outline outline-[#7a6b76]" : t.active ? "border border-white bg-linear-to-b from-[#a89ba6] to-[#c9c1c8] outline outline-[#6f616c]" : "")}>
          {t.active ? (
            <Svg w={24} h={31}>
              <ellipse cx="14" cy="28" rx="9" ry="2" fill="#9b8f9a" opacity=".6" />
              <path d="M2 1v11q0 4 4 4.500l7 1.300" stroke="#1d5486" strokeWidth="2.400" fill="none" />
              <path d="M7.500 11l8 1.700q6 1.300 6 6V30" stroke="#1d5486" strokeWidth="2.400" fill="none" />
            </Svg>
          ) : (
            <Svg w={31} h={31} vb="0 0 32 32">{t.art}</Svg>
          )}
        </div>
      ))}
      <Svg w={170} h={40} className="ml-[396px]">
        <path d="M10 0h160v40H105z" fill="#7f7187" />
        <path d="M10 0H47Q85 17 107 24Q118 32 130 40H103z" fill="#5c4355" />
        <path d="M27 0H45Q84 17 105 24Q118 33 128 40H115L78 22z" fill="#6b2536" />
        <path d="M50 0q24 15 53 23l40 17" stroke="#6d7890" strokeWidth="2" fill="none" opacity=".7" />
      </Svg>
      <div className="flex flex-1 items-center bg-linear-to-r from-[#7f7187] to-[#766b80]">
        <Svg w={70} h={16} className="ml-[70px]">
          <path d="M0 10h8L4 5.500z" fill="#fff" />
          <path d="M20 5h3l4-4v14l-4-4h-3z" fill="#fff" /><path d="M29 5q2 3 0 6M31.500 3q3.500 5 0 10" stroke="#fff" strokeWidth="1.200" fill="none" />
          <path d="M45 2h4v5h-4zM50 2.500h9V12H47M47 7v6" stroke="#fff" strokeWidth="1.500" fill="none" />
          <path d="M55 5l5.500 10h-11z" fill="#f6c21c" /><path d="M55 8v4M55 13v1" stroke="#222" strokeWidth="1.200" />
        </Svg>
        <Svg w={16} h={16} className="-ml-[1px]"><path d="M1 1v14" stroke="#fff" strokeWidth="1.500" /><path d="M2 2h7v2h6q-2 5-5 4.500L9 8H2z" fill="#fff" /></Svg>
        <div className={"mt-px mr-[19px] ml-auto flex w-[48px] flex-col items-center text-[12px] leading-[17px] " + UI}>
          <T w={41}>5:11 PM</T><T w={46}>6/3/2014</T>
        </div>
      </div>
    </div>
  );
}

export default function App() {
  return (
    <div className={"flex h-[900px] w-[1600px] flex-col overflow-hidden bg-[#f0f0f0] " + SANS}>
      <div className="flex h-[23px] shrink-0 items-center border-b border-[#a44d57] bg-[#bc5a64]">
        <Svg w={12} h={14} className="ml-[6px]"><path d="M1.500 1v4q0 2 2 2.300l3 .600M5 4.500l3 .600q2.500.600 2.500 3V13" stroke="#27577f" strokeWidth="1.400" fill="none" /></Svg>
        <T w={90} className={"mt-px ml-[736px] text-[14.500px] leading-[20px] text-[#35181c] " + UI}>IDM Analytics</T>
        <Svg w={9} h={3} className="mt-[1px] ml-auto"><path d="M0 1.500h8" stroke="#2a1518" strokeWidth="2.500" /></Svg>
        <Svg w={11} h={10} className="mr-[8px] mb-[4px] ml-[16px]"><path d="M.7 2.700h7v6.500h-7zM2.500.700h7v7" stroke="#2a1518" strokeWidth="1.300" fill="none" /></Svg>
        <div className="mr-[2px] mb-[4px] flex h-[19px] w-[46px] items-center justify-center bg-[#c84f50]">
          <Svg w={9} h={8}><path d="M1 0l7 8M8 0L1 8" stroke="#fff" strokeWidth="1.900" /></Svg>
        </div>
      </div>
      <div className="flex h-[23px] shrink-0 items-center bg-linear-to-r from-[#f0f0f0] to-[#fdfdfd] pl-[15px]">
        <U w={18}>File</U><U w={24} className="ml-[19px]">Help</U>
      </div>
      <div className="flex h-[26px] shrink-0 items-center bg-linear-to-b from-[#fcfcfc] to-[#f1f1f1] pl-[3px]">
        <Grip /><Page className="ml-[8px]" /><U w={24} className="ml-[5px]">New</U><Caret className="ml-[5px]" />
        <CalTable className="ml-[6px]" /><U w={54} className="ml-[3px]">User Table</U><Caret className="ml-[6px]" />
        <Search className="ml-[7px]" /><U w={34} className="ml-[4px]">Search</U>
      </div>
      <div className="flex h-[765px] shrink-0">
        <LeftPanel />
        <Main />
      </div>
      <div className="flex h-[23px] shrink-0 items-center bg-[#f0f0f0] pl-[2px]">
        <T w={30} className="text-[12px] leading-[16px] text-black">Ready</T>
        <div className="ml-auto flex h-full w-[85px] items-center border-l border-[#d2d2d2] pl-[4px]"><T w={68} className="text-[12px] leading-[16px] text-black">STR_02JUNE</T></div>
        <div className="flex h-full w-[81px] items-center border-l border-[#d2d2d2] pl-[4px]"><T w={60} className="text-[12px] leading-[16px] text-black">Administrator</T></div>
        <div className="flex h-full w-[34px] items-center border-l border-[#d2d2d2] pl-[4px]"><T w={20} className="text-[12px] leading-[16px] text-black">N/A</T></div>
      </div>
      <Taskbar />
    </div>
  );
}
